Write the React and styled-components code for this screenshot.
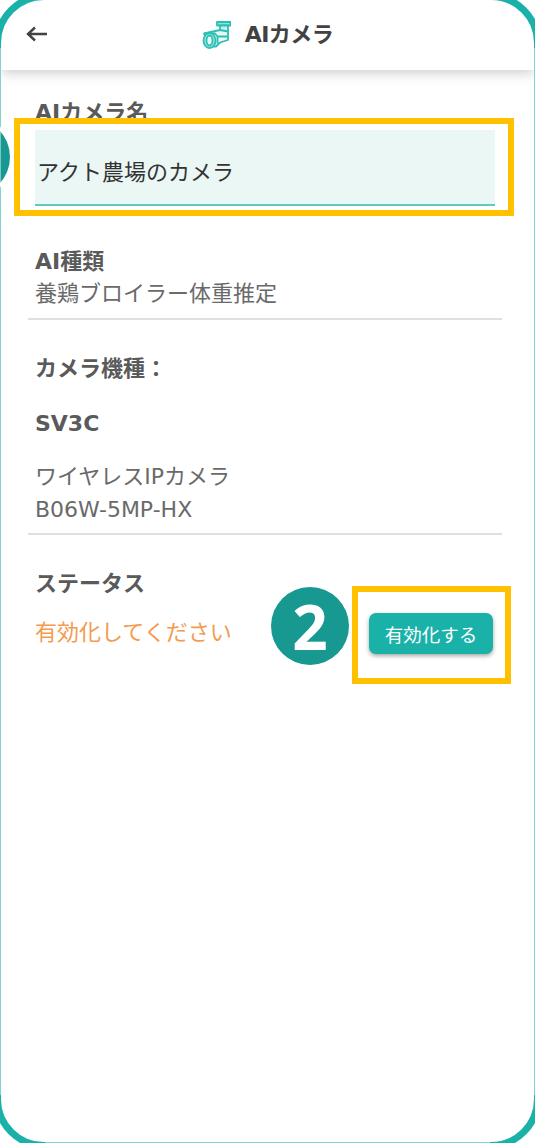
import React from "react";
import styled, { createGlobalStyle } from "styled-components";

const GlobalStyle = createGlobalStyle`
	html, body {
		margin: 0;
		padding: 0;
		background: #ffffff;
	}
	body {
		font-family: "DejaVu Sans", "Noto Sans CJK JP", sans-serif;
		overflow: hidden;
	}
`;

const Viewport = styled.div`
	position: relative;
	width: 535px;
	height: 1143px;
	overflow: hidden;
	background: #ffffff;

	/* the device outline fades to a lighter tint along its straight edges */
	&::before {
		content: "";
		position: absolute;
		top: 48px;
		bottom: 48px;
		left: 0;
		right: 0;
		border-left: 1px solid rgba(255, 255, 255, 0.45);
		border-right: 1px solid rgba(255, 255, 255, 0.45);
		pointer-events: none;
		z-index: 1;
	}
	&::after {
		content: "";
		position: absolute;
		left: 45px;
		right: 45px;
		bottom: 0;
		height: 1px;
		background: rgba(255, 255, 255, 0.45);
		pointer-events: none;
		z-index: 1;
	}
`;

const Frame = styled.div`
	box-sizing: border-box;
	width: 547px;
	height: 1156px;
	margin: -7px 0 0 -6px;
	border: 7px solid #1ab2a8;
	border-radius: 50px;
	overflow: hidden;
	background: #ffffff;
`;

const Header = styled.header`
	height: 70px;
	display: flex;
	align-items: center;
	justify-content: center;
	position: relative;
	box-shadow: 0 3px 12px rgba(0, 0, 0, 0.2);
`;

const BackButton = styled.button`
	position: absolute;
	left: 24px;
	top: 24px;
	width: 24px;
	height: 20px;
	padding: 0;
	border: none;
	background: none;
	color: #424242;
`;

const HeaderTitle = styled.h1`
	margin: 0;
	font-size: 22px;
	line-height: 28px;
	font-weight: 700;
	letter-spacing: -0.5px;
	color: #424242;
`;

const TitleGroup = styled.div`
	display: flex;
	align-items: center;
	gap: 14px;
`;

const Content = styled.main`
	padding: 28px 32px 0 27px;
`;

const Section = styled.section`
	padding: 0 7px ${({ $bottom }) => $bottom || 0}px;
	border-bottom: ${({ $noLine }) => ($noLine ? "none" : "2px solid #e0e0e0")};
`;

const Label = styled.div`
	font-size: 22px;
	line-height: 28px;
	font-weight: 700;
	color: #5a5a5a;
	padding-top: 1px;
	margin-bottom: -1px;
	margin-top: ${({ $top }) => $top || 0}px;
`;

const Value = styled.div`
	font-size: 22px;
	line-height: 33px;
	color: ${({ $accent }) => ($accent ? "#f59a4f" : "#6a6a6a")};
	margin-top: ${({ $top }) => $top || 0}px;
`;

const NameField = styled.div`
	height: 76px;
	margin-top: 4px;
	padding: 28px 2px 0;
	box-sizing: border-box;
	background: #eaf7f5;
	border-bottom: 2px solid #5fcac2;
	font-size: 22px;
	line-height: 30px;
	color: #333333;
`;

const StatusRow = styled.div`
	display: flex;
	align-items: center;
	justify-content: space-between;
	margin-top: 16px;
	padding-right: 2px;
`;

const ActivateButton = styled.button`
	width: 124px;
	height: 41px;
	padding: 0;
	border: none;
	border-radius: 7px;
	background: #1ab2a8;
	color: #ffffff;
	font-family: inherit;
	font-size: 18.5px;
	box-shadow: 0 2px 4px rgba(0, 0, 0, 0.35);
`;

const Highlight = styled.div`
	position: absolute;
	box-sizing: border-box;
	left: ${({ $x }) => $x}px;
	top: ${({ $y }) => $y}px;
	width: ${({ $w }) => $w}px;
	height: ${({ $h }) => $h}px;
	border: 6px solid #ffc000;
`;

const StepBadge = styled.div`
	position: absolute;
	box-sizing: border-box;
	left: ${({ $x }) => $x}px;
	top: ${({ $y }) => $y}px;
	width: 78px;
	height: 78px;
	border-radius: 50%;
	background: #179891;
	color: #ffffff;
	display: flex;
	align-items: center;
	justify-content: center;
	font-family: "Noto Sans", sans-serif;
	font-size: 62px;
	line-height: 1;
	font-weight: 700;
	box-shadow: 0 0 0 3px #ffffff;
`;

const ArrowIcon = () => (
	<svg width="24" height="20" viewBox="0 0 24 20" fill="none" stroke="currentColor" strokeWidth="2.4">
		<path d="M22 10H3M10 3.5 3 10l7 6.5" />
	</svg>
);

const CameraIcon = () => (
	<svg width="29" height="28" viewBox="0 0 29 28" fill="none" stroke="#2cbfb4" strokeWidth="1.8" strokeLinejoin="round">
		<path d="M15 1h13.5v3.5H15z" fill="#8fded8" />
		<path d="M18 4.5h8v8h-8z" fill="#c9efec" />
		<path d="M2 12.5 18 9l8 1.500v8.500l-8 2.500-4 4H8z" fill="#e9f8f6" />
		<path d="M2 12.500h11l2.500 3H26M15.500 15.500v7" />
		<ellipse cx="7.500" cy="19.500" rx="6" ry="7.500" fill="#a5e5df" />
		<ellipse cx="7.500" cy="19.500" rx="3" ry="5" fill="#e9f8f6" />
	</svg>
);

const App = () => (
	<Viewport>
		<GlobalStyle />
		<Frame>
			<Header>
				<BackButton aria-label="戻る">
					<ArrowIcon />
				</BackButton>
				<TitleGroup>
					<CameraIcon />
					<HeaderTitle>AIカメラ</HeaderTitle>
				</TitleGroup>
			</Header>
			<Content>
				<Section $noLine>
					<Label>AIカメラ名</Label>
					<NameField>アクト農場のカメラ</NameField>
				</Section>
				<Section $bottom={8}>
					<Label $top={41}>AI種類</Label>
					<Value $top={2}>養鶏ブロイラー体重推定</Value>
				</Section>
				<Section $bottom={7}>
					<Label $top={34}>カメラ機種：</Label>
					<Label $top={27}>SV3C</Label>
					<Value $top={23}>ワイヤレスIPカメラ</Value>
					<Value>B06W-5MP-HX</Value>
				</Section>
				<Section $noLine>
					<Label $top={34}>ステータス</Label>
					<StatusRow>
						<Value $accent $top={-2}>有効化してください</Value>
						<ActivateButton>有効化する</ActivateButton>
					</StatusRow>
				</Section>
			</Content>
		</Frame>
		<Highlight $x={14} $y={118} $w={500} $h={98} />
		<Highlight $x={352} $y={586} $w={159} $h={98} />
		<StepBadge $x={-68} $y={118} />
		<StepBadge $x={271} $y={587}>2</StepBadge>
	</Viewport>
);

export default App;
